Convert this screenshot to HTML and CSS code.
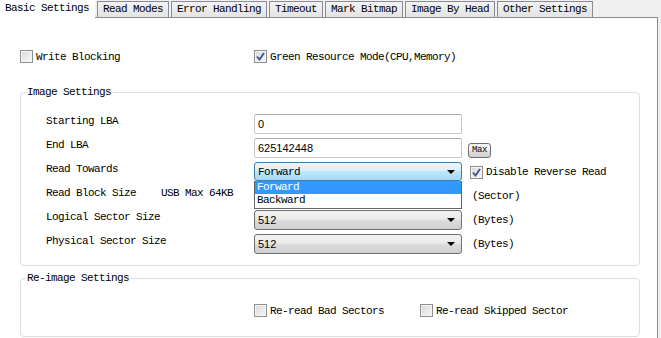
FILE: index.html
```html
<!DOCTYPE html>
<html lang="en">
<head>
  <title>Basic Settings</title>
  <meta charset="utf-8">
  <link rel="stylesheet" href="styles.css">
</head>
<body>
  <div class="tabs">
    <span class="tab active">Basic Settings</span>
    <span class="tab">Read Modes</span>
    <span class="tab">Error Handling</span>
    <span class="tab">Timeout</span>
    <span class="tab">Mark Bitmap</span>
    <span class="tab">Image By Head</span>
    <span class="tab">Other Settings</span>
  </div>

  <div class="panel">
    <div class="top-options">
      <label class="check"><span class="box"></span>Write Blocking</label>
      <label class="check"><span class="box checked"><svg viewBox="0 0 11 11"><path d="M2 5.5 L4.5 8.5 L9 2" /></svg></span>Green Resource Mode(CPU,Memory)</label>
    </div>

    <fieldset class="group image-group">
      <legend>Image Settings</legend>
      <div class="rows">
        <span class="label">Starting LBA</span>
        <span class="field">0</span>
        <span></span>

        <span class="label">End LBA</span>
        <span class="field">625142448</span>
        <span class="extra"><span class="button">Max</span></span>

        <span class="label">Read Towards</span>
        <div class="combo-wrap">
          <div class="combo open"><span class="mono">Forward</span><span class="arrow"></span></div>
          <ul class="dropdown">
            <li class="selected">Forward</li>
            <li>Backward</li>
          </ul>
        </div>
        <span class="extra check-extra"><label class="check"><span class="box checked"><svg viewBox="0 0 11 11"><path d="M2 5.5 L4.5 8.5 L9 2" /></svg></span>Disable Reverse Read</label></span>

        <span class="label"><span class="label-main">Read Block Size</span>USB Max 64KB</span>
        <div class="combo"><span></span><span class="arrow"></span></div>
        <span class="extra unit">(Sector)</span>

        <span class="label">Logical Sector Size</span>
        <div class="combo"><span>512</span><span class="arrow"></span></div>
        <span class="extra unit">(Bytes)</span>

        <span class="label">Physical Sector Size</span>
        <div class="combo"><span>512</span><span class="arrow"></span></div>
        <span class="extra unit">(Bytes)</span>
      </div>
    </fieldset>

    <fieldset class="group reimage-group">
      <legend>Re-image Settings</legend>
      <div class="reimage-options">
        <label class="check"><span class="box"></span>Re-read Bad Sectors</label>
        <label class="check"><span class="box"></span>Re-read Skipped Sector</label>
      </div>
    </fieldset>
  </div>
</body>
</html>
```

FILE: styles.css
```css
body {
  background-color: #f0f0f0;
  color: #000000;
  font-family: "Liberation Mono", monospace;
  font-size: 11px;
  letter-spacing: -0.6px;
  margin: 0;
  overflow: hidden;
}

.tabs {
  display: flex;
  align-items: flex-end;
  height: 17px;
}

.tab {
  background: linear-gradient(#f3f3f3, #e3e3e3);
  border: 1px solid #898c95;
  border-bottom: none;
  box-sizing: border-box;
  height: 16px;
  line-height: 14px;
  margin-left: 2px;
  padding: 0 5px;
  white-space: nowrap;
}

.tab.active {
  background-color: #ffffff;
  background-image: none;
  border: none;
  height: 18px;
  line-height: 16px;
  margin: 0 0 -1px 0;
  padding: 0 6px 0 5px;
  position: relative;
  width: 95px;
}

.panel {
  background-color: #ffffff;
  border: 1px solid #898c95;
  border-bottom: none;
  border-left: none;
  box-sizing: border-box;
  height: 321px;
  padding: 32px 17px 0 20px;
  width: 658px;
}

.top-options {
  display: flex;
}

.top-options .check:first-child {
  width: 234px;
}

.check {
  align-items: center;
  display: flex;
  height: 13px;
  white-space: nowrap;
}

.box {
  background: linear-gradient(135deg, #d6d6d6, #fafafa);
  border: 1px solid #8e8f8f;
  box-shadow: inset 0 0 0 1px #f4f4f4;
  box-sizing: border-box;
  display: inline-block;
  height: 13px;
  margin-right: 3px;
  position: relative;
  width: 13px;
}

.box svg {
  height: 11px;
  left: 0;
  position: absolute;
  top: 0;
  width: 11px;
}

.box path {
  fill: none;
  stroke: #3b4f91;
  stroke-width: 1.8;
}

.group {
  border: 1px solid #d5dfe5;
  border-radius: 4px;
  margin: 0;
  min-width: 0;
  padding: 0;
}

.group legend {
  line-height: 12px;
  margin-left: 5px;
  padding: 0 2px 0 1px;
}

.image-group {
  margin-top: 23px;
}

.rows {
  display: grid;
  grid-template-columns: 208px 208px auto;
  grid-auto-rows: 20px;
  row-gap: 4px;
  padding: 16px 0 11px 25px;
}

.label {
  line-height: 14px;
  white-space: nowrap;
}

.label-main {
  display: inline-block;
  width: 115px;
}

.field {
  border: 1px solid #c4c8ce;
  border-top-color: #abadb3;
  border-radius: 2px;
  font-family: "Liberation Sans", sans-serif;
  font-size: 11px;
  letter-spacing: 0;
  line-height: 18px;
  padding: 0 3px;
}

.extra {
  align-items: center;
  display: flex;
  padding-left: 6px;
}

.check-extra {
  padding-left: 8px;
}

.unit {
  padding-left: 10px;
}

.button {
  background: linear-gradient(#f4f4f4 45%, #dddddd 55%, #d0d0d0);
  border: 1px solid #707070;
  border-radius: 3px;
  box-sizing: border-box;
  font-size: 9px;
  height: 15px;
  letter-spacing: -0.4px;
  line-height: 13px;
  margin-top: 5px;
  text-align: center;
  width: 23px;
}

.combo {
  align-items: center;
  background: linear-gradient(#f2f2f2 0%, #ebebeb 45%, #dddddd 50%, #cfcfcf 100%);
  border: 1px solid #707070;
  border-radius: 3px;
  box-sizing: border-box;
  display: flex;
  font-family: "Liberation Sans", sans-serif;
  height: 20px;
  justify-content: space-between;
  letter-spacing: 0;
  padding: 0 6px 0 3px;
}

.combo.open {
  background: linear-gradient(#eaf6fd 0%, #d9f0fc 45%, #bee6fd 50%, #a7d9f5 100%);
  border-color: #3c7fb1;
  height: 19px;
}

.mono {
  font-family: "Liberation Mono", monospace;
  letter-spacing: -0.6px;
}

.arrow {
  border-left: 4px solid transparent;
  border-right: 4px solid transparent;
  border-top: 4px solid #000000;
  height: 0;
  width: 0;
}

.combo-wrap {
  position: relative;
}

.dropdown {
  background-color: #ffffff;
  border: 1px solid #646464;
  border-top: none;
  box-sizing: border-box;
  left: 0;
  list-style: none;
  margin: 0;
  padding: 0 0 1px;
  position: absolute;
  top: 19px;
  width: 208px;
  z-index: 2;
}

.dropdown li {
  height: 13px;
  line-height: 13px;
  padding-left: 2px;
}

.dropdown .selected {
  background-color: #3399ff;
  color: #ffffff;
}

.reimage-group {
  margin-top: 6px;
}

.reimage-options {
  box-sizing: border-box;
  display: flex;
  gap: 36px;
  height: 52px;
  padding: 20px 0 0 233px;
}
```
